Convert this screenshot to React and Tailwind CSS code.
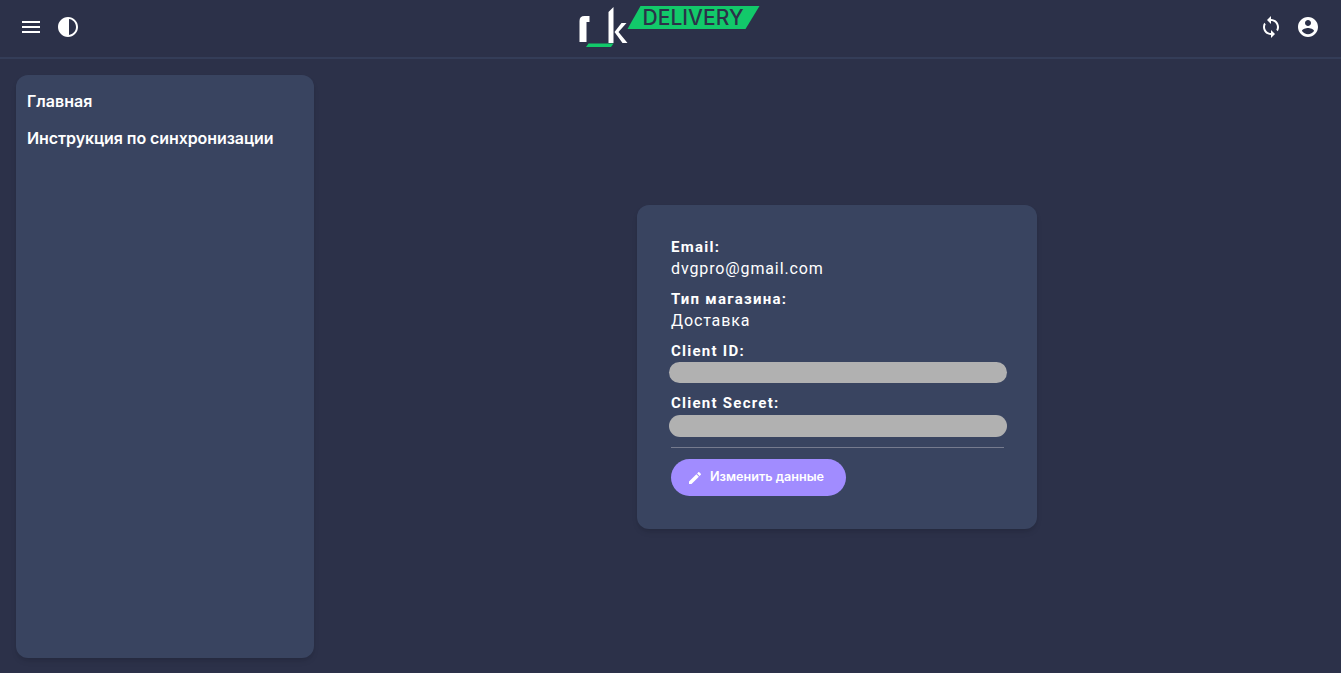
import React from 'react';

const Icon = ({ d, className = 'w-6 h-6' }) => (
  <svg viewBox="0 0 24 24" fill="currentColor" className={className}>
    <path d={d} />
  </svg>
);

const icons = {
  menu: 'M3 18h18v-2H3v2zm0-5h18v-2H3v2zm0-7v2h18V6H3z',
  contrast: 'M12 22c5.52 0 10-4.48 10-10S17.52 2 12 2 2 6.48 2 12s4.48 10 10 10zm1-17.93c3.94.49 7 3.85 7 7.93s-3.05 7.44-7 7.93V4.07z',
  sync: 'M12 4V1L8 5l4 4V6c3.31 0 6 2.69 6 6 0 1.01-.25 1.97-.7 2.8l1.46 1.46C19.54 15.03 20 13.57 20 12c0-4.42-3.58-8-8-8zm0 14c-3.31 0-6-2.69-6-6 0-1.01.25-1.97.7-2.8L5.24 7.74C4.46 8.97 4 10.43 4 12c0 4.42 3.58 8 8 8v3l4-4-4-4v3z',
  account: 'M12 2C6.48 2 2 6.48 2 12s4.48 10 10 10 10-4.48 10-10S17.52 2 12 2zm0 3c1.66 0 3 1.34 3 3s-1.34 3-3 3-3-1.34-3-3 1.34-3 3-3zm0 14.2c-2.5 0-4.71-1.28-6-3.22.03-1.99 4-3.08 6-3.08 1.99 0 5.97 1.09 6 3.08-1.29 1.94-3.5 3.22-6 3.22z',
  edit: 'M3 17.25V21h3.75L17.81 9.94l-3.75-3.75L3 17.25zM20.71 7.04c.39-.39.39-1.02 0-1.41l-2.34-2.34c-.39-.39-1.02-.39-1.41 0l-1.83 1.83 3.75 3.75 1.83-1.83z',
};

// r_k DELIVERY logo
const Logo = () => (
  <svg viewBox="575.5 0 190 50" className="w-[190px] h-[50px]">
    <path d="M579 42V21q0-5 5-5h5v6h-3v20z" fill="#ffffff" />
    <path d="M588 43.5h25l-2.5 3.5h-25z" fill="#12c96a" />
    <path d="M608 12l5-5v36h-5z" fill="#ffffff" />
    <path d="M621 23h5l-8 9 9 11h-5l-8-11z" fill="#ffffff" />
    <path d="M640 6h119l-14 23H627z" fill="#12c96a" />
    <text x="642" y="25" fill="#2c3149" fontSize="21" fontWeight="500" fontFamily="Inter, sans-serif" textLength="101">DELIVERY</text>
  </svg>
);

const Label = ({ children }) => (
  <div className="h-[22px] text-[15px] leading-[22px] font-bold tracking-[1.25px]">{children}</div>
);

const Field = ({ label, value }) => (
  <div>
    <Label>{label}</Label>
    <div className="h-[22px] text-[16px] leading-[22px] tracking-[0.875px]">{value}</div>
  </div>
);

export default function App() {
  return (
    <div className="flex flex-col h-screen bg-[#2c3149] text-white font-['Roboto',sans-serif]">
      {/* Header */}
      <header className="grid grid-cols-3 h-[59px] flex-shrink-0 border-b-2 border-[#343d58]">
        <div className="flex items-center gap-[13px] pl-[19px] pb-[4px]">
          <Icon d={icons.menu} />
          <Icon d={icons.contrast} />
        </div>
        <div className="flex justify-center">
          <Logo />
        </div>
        <div className="flex items-center justify-end gap-[13px] pr-[21px] pb-[4px]">
          <Icon d={icons.sync} />
          <Icon d={icons.account} />
        </div>
      </header>

      <div className="flex flex-1 min-h-0 pl-4 pt-4 pb-[15px]">
        {/* Sidebar */}
        <nav className="w-[298px] flex-shrink-0 rounded-xl bg-[#394460] shadow-md px-[11px] pt-[8px] font-['Inter',sans-serif] text-[16px] font-semibold">
          <div className="h-[37px] leading-[37px]">Главная</div>
          <div className="h-[37px] leading-[37px] tracking-[-0.08px]">Инструкция по синхронизации</div>
        </nav>

        {/* Content */}
        <main className="flex flex-1 items-center justify-center ml-[19px]">
          <div className="w-[400px] mt-px rounded-xl bg-[#394460] shadow-md pl-[34px] pr-[33px] pt-[31px] pb-[33px]">
            <div className="flex flex-col gap-2">
              <Field label="Email:" value="dvgpro@gmail.com" />
              <Field label="Тип магазина:" value="Доставка" />
              <div>
                <Label>Client ID:</Label>
                <div className="mb-px -ml-0.5 h-[21px] w-[338px] rounded-[11px] bg-[#b1b1b1]" />
              </div>
              <div>
                <Label>Client Secret:</Label>
                <div className="mt-px -ml-0.5 h-[22px] w-[338px] rounded-[11px] bg-[#b1b1b1]" />
              </div>
            </div>
            <div className="mt-[10px] h-px bg-[#767b8e]" />
            <button className="mt-[11px] flex items-center gap-[7px] h-[37px] w-[175px] pl-[16px] rounded-full bg-[#a18cff] text-[12.6px] font-semibold font-['Inter',sans-serif]">
              <Icon d={icons.edit} className="w-4 h-4" />
              <span>Изменить данные</span>
            </button>
          </div>
        </main>
      </div>
    </div>
  );
}
